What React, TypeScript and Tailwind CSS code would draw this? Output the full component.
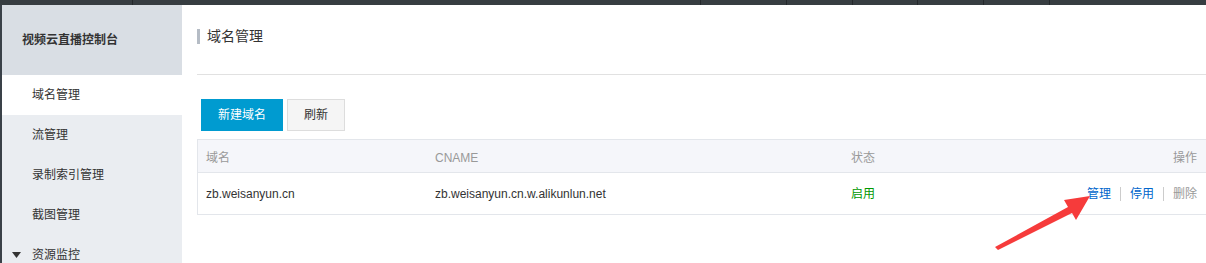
import React from 'react';

// ---------------------------------------------------------------------------
// Constants
// ---------------------------------------------------------------------------

const FONT = '"Liberation Sans", "Noto Sans CJK SC", sans-serif';

const NAV = ['流管理', '录制索引管理', '截图管理'];

// Top strip separators (x offsets of the tab dividers)
const TOP_DIVIDERS = [132, 700, 786, 852, 917, 983, 1049];

// ---------------------------------------------------------------------------
// Pieces
// ---------------------------------------------------------------------------

function TopStrip() {
  return (
    <div className="relative h-[5px] w-full bg-[#373d41]">
      {TOP_DIVIDERS.map((x) => (
        <span key={x} className="absolute top-0 h-full w-px bg-[#24282b]" style={{ left: x }} />
      ))}
    </div>
  );
}

function Sidebar() {
  return (
    <aside className="flex w-[182px] shrink-0 flex-col border-l-2 border-[#3a4148] bg-[#eaedf1]">
      <div className="flex h-[70px] shrink-0 items-center bg-[#d9dee4] pl-5 text-[12px] font-bold text-[#333]">
        视频云直播控制台
      </div>
      <div className="flex h-10 shrink-0 items-center bg-white pl-[30px] text-[12px] text-[#333]">域名管理</div>
      {NAV.map((n) => (
        <div key={n} className="flex h-10 shrink-0 items-center pl-[30px] text-[12px] text-[#333]">
          {n}
        </div>
      ))}
      <div className="flex h-10 shrink-0 items-center pl-[10px] text-[12px] text-[#333]">
        <svg width="9" height="6" viewBox="0 0 9 6" className="mr-[11px]">
          <path d="M0 0h9L4.5 6z" fill="#333" />
        </svg>
        资源监控
      </div>
    </aside>
  );
}

function Table() {
  return (
    <div className="mr-[-4px] border border-[#e3e6eb] text-[12px]">
      <div className="flex h-[33px] items-center border-b border-[#e3e6eb] bg-[#f5f6fa] pl-2 pr-3 pt-[3px] text-[#999]">
        <span className="w-[229px]">域名</span>
        <span className="w-[416px]">CNAME</span>
        <span className="flex-1">状态</span>
        <span>操作</span>
      </div>
      <div className="flex h-[41px] items-center pl-2 pr-3 text-[#333]">
        <span className="w-[229px]">zb.weisanyun.cn</span>
        <span className="w-[416px]">zb.weisanyun.cn.w.alikunlun.net</span>
        <span className="flex-1 text-[#009900]">启用</span>
        <span className="flex items-center">
          <span className="text-[#0066cc]">管理</span>
          <span className="mx-[9px] h-[14px] w-px bg-[#ccc]" />
          <span className="text-[#0066cc]">停用</span>
          <span className="mx-[9px] h-[14px] w-px bg-[#ccc]" />
          <span className="text-[#999]">删除</span>
        </span>
      </div>
    </div>
  );
}

function Arrow() {
  return (
    <svg
      className="pointer-events-none absolute left-0 top-0"
      width="1206"
      height="263"
      viewBox="0 0 1206 263"
    >
      <path
        d="M995 247 L1068 207 L1064 200 L1090 196 L1076 220 L1072 213 L998 250 Z"
        fill="#f63b3b"
      />
    </svg>
  );
}

// ---------------------------------------------------------------------------
// Main
// ---------------------------------------------------------------------------

export default function App() {
  return (
    <div className="relative h-[263px] w-[1206px] overflow-hidden bg-white" style={{ fontFamily: FONT }}>
      <TopStrip />
      <div className="flex h-[258px]">
        <Sidebar />
        <main className="flex-1 pl-[15px]">
          <div className="flex h-[69px] items-center pb-[6px]">
            <span className="mr-[7px] h-[15px] w-[3px] bg-[#b5bcc5]" />
            <span className="text-[14px] text-[#333]">域名管理</span>
          </div>
          <div className="h-px bg-[#e1e1e1]" />
          <div className="flex gap-[4px] pl-[4px] pt-6">
            <button className="h-8 w-[82px] bg-[#009bd0] text-[12px] text-white">新建域名</button>
            <button className="h-8 w-[58px] border border-[#ddd] bg-[#f5f5f5] text-[12px] text-[#333]">刷新</button>
          </div>
          <div className="mt-2">
            <Table />
          </div>
        </main>
      </div>
      <Arrow />
    </div>
  );
}
